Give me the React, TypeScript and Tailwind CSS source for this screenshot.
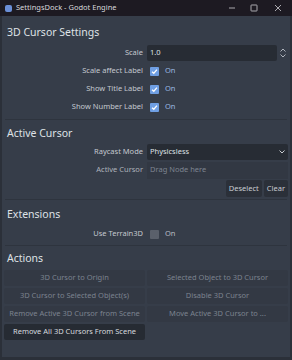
import React from "react";

const font = { fontFamily: '"Noto Sans", "Open Sans", sans-serif' };

function Check({ on }: { on: boolean }) {
  return on ? (
    <span className="w-[9px] h-[9px] rounded-[1px] bg-[#6f9fe4] flex items-center justify-center">
      <svg width="7" height="7" viewBox="0 0 8 8">
        <path d="M1.2 4.2 L3.2 6 L6.8 1.8" stroke="#fff" strokeWidth="1.4" fill="none" />
      </svg>
    </span>
  ) : (
    <span className="w-[9px] h-[9px] rounded-[1px] bg-[#5a606b]" />
  );
}

function Row({ label, children }: { label: string; children: React.ReactNode }) {
  return (
    <div className="flex items-center h-[18px]">
      <div className="w-[144px] text-right pr-[4px] text-[#c4c8cf]">{label}</div>
      <div className="flex-1 flex items-center">{children}</div>
    </div>
  );
}

function CheckRow({ label, on }: { label: string; on: boolean }) {
  return (
    <Row label={label}>
      <div className="flex items-center gap-[6px] pl-[3px]">
        <Check on={on} />
        <span className={on ? "text-[#9ab9e4]" : "text-[#b8bcc4]"}>On</span>
      </div>
    </Row>
  );
}

function Header({ children }: { children: React.ReactNode }) {
  return <div className="text-[10.5px] text-[#dfe2e6] pl-[4px] h-[20px] flex items-center">{children}</div>;
}

function Sep() {
  return <div className="h-px bg-[#2e343e] mx-[2px]" />;
}

export default function App() {
  return (
    <div className="w-[292px] h-[360px] bg-[#2b3039] flex flex-col text-[7.5px] leading-none" style={font}>
      <div className="h-[16px] bg-[#1d1a22] flex items-center px-[5px] shrink-0">
        <div className="w-[7px] h-[7px] rounded-[2px] bg-[#6b8fd8] mr-[4px]" />
        <span className="text-[7.5px] text-[#d8d8dc]">SettingsDock - Godot Engine</span>
        <div className="flex-1" />
        <svg width="8" height="8" viewBox="0 0 8 8" className="mr-[14px]">
          <path d="M1 4 H7" stroke="#cfcfd3" strokeWidth="0.8" />
        </svg>
        <svg width="8" height="8" viewBox="0 0 8 8" className="mr-[16px]">
          <rect x="1" y="1" width="6" height="6" stroke="#cfcfd3" strokeWidth="0.8" fill="none" rx="0.5" />
        </svg>
        <svg width="8" height="8" viewBox="0 0 8 8" className="mr-[5px]">
          <path d="M1 1 L7 7 M7 1 L1 7" stroke="#cfcfd3" strokeWidth="0.8" />
        </svg>
      </div>
      <div className="flex-1 bg-[#363d49] mx-[2px] mb-[3px] px-[1px] pt-[6px] flex flex-col">
        <Header>3D Cursor Settings</Header>
        <div className="flex items-center h-[18px] mt-[2px]">
          <div className="w-[144px] text-right pr-[4px] text-[#c4c8cf]">Scale</div>
          <div className="w-[130px] h-[16px] bg-[#272c34] rounded-[2px] flex items-center px-[3px] text-[#dfe2e6]">1.0</div>
          <div className="flex-1 flex flex-col items-center justify-center gap-[2px]">
            <svg width="6" height="4" viewBox="0 0 6 4"><path d="M0.5 3.5 L3 1 L5.5 3.5" stroke="#aeb3bb" strokeWidth="1" fill="none" /></svg>
            <svg width="6" height="4" viewBox="0 0 6 4"><path d="M0.5 0.5 L3 3 L5.5 0.5" stroke="#aeb3bb" strokeWidth="1" fill="none" /></svg>
          </div>
        </div>
        <CheckRow label="Scale affect Label" on />
        <CheckRow label="Show Title Label" on />
        <CheckRow label="Show Number Label" on />
        <div className="h-[3px]" />
        <Sep />
        <div className="h-[3px]" />
        <Header>Active Cursor</Header>
        <div className="flex items-center h-[18px]">
          <div className="w-[144px] text-right pr-[4px] text-[#c4c8cf]">Raycast Mode</div>
          <div className="flex-1 h-[16px] bg-[#272c34] rounded-[2px] flex items-center px-[3px] text-[#dfe2e6] mr-[1px]">
            <span className="flex-1">Physicsless</span>
            <svg width="6" height="4" viewBox="0 0 6 4"><path d="M0.5 0.5 L3 3 L5.5 0.5" stroke="#c8ccd2" strokeWidth="1" fill="none" /></svg>
          </div>
        </div>
        <div className="flex items-center h-[18px]">
          <div className="w-[144px] text-right pr-[4px] text-[#aeb3bb]">Active Cursor</div>
          <div className="flex-1 h-[17px] bg-[#323843] flex items-center px-[3px] text-[#7e8591] mr-[1px]">Drag Node here</div>
        </div>
        <div className="h-[1px]" />
        <div className="flex justify-end gap-[2px] mr-[1px]">
          <div className="h-[17px] px-[3px] bg-[#2b3039] rounded-[2px] flex items-center text-[#c8ccd2]">Deselect</div>
          <div className="h-[17px] px-[3px] bg-[#2b3039] rounded-[2px] flex items-center text-[#c8ccd2]">Clear</div>
        </div>
        <div className="h-[2px]" />
        <Sep />
        <div className="h-[4px]" />
        <Header>Extensions</Header>
        <div className="h-[1px]" />
        <CheckRow label="Use Terrain3D" on={false} />
        <div className="h-[2px]" />
        <Sep />
        <div className="h-[2px]" />
        <Header>Actions</Header>
        <div className="h-[2px]" />
        <div className="grid grid-cols-2 gap-x-[2px] gap-y-[2px] px-[1px] text-[#7c838f]">
          <div className="h-[16px] bg-[#333944] rounded-[2px] flex items-center justify-center">3D Cursor to Origin</div>
          <div className="h-[16px] bg-[#333944] rounded-[2px] flex items-center justify-center">Selected Object to 3D Cursor</div>
          <div className="h-[16px] bg-[#333944] rounded-[2px] flex items-center justify-center">3D Cursor to Selected Object(s)</div>
          <div className="h-[16px] bg-[#333944] rounded-[2px] flex items-center justify-center">Disable 3D Cursor</div>
          <div className="h-[16px] bg-[#333944] rounded-[2px] flex items-center justify-center">Remove Active 3D Cursor from Scene</div>
          <div className="h-[16px] bg-[#333944] rounded-[2px] flex items-center justify-center">Move Active 3D Cursor to ...</div>
          <div className="h-[16px] bg-[#262b33] rounded-[2px] flex items-center justify-center text-[#d6d9de]">Remove All 3D Cursors From Scene</div>
        </div>
      </div>
    </div>
  );
}
